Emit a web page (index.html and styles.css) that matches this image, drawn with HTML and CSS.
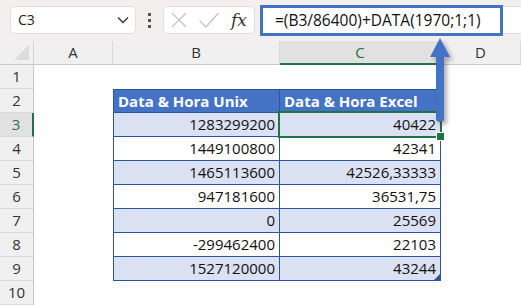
FILE: index.html
```html
<!DOCTYPE html>
<html lang="pt">

<head>
    <meta charset="UTF-8">
    <title>Unix para Excel</title>
    <link rel="stylesheet" href="styles.css">
</head>

<body>
    <div class="app">
        <div class="toolbar">
            <div class="name-box">
                <span>C3</span>
                <svg class="chevron" width="12" height="8" viewBox="0 0 12 8">
                    <path d="M1 1.5 L6 6.5 L11 1.5" fill="none" stroke="#333" stroke-width="1.3" />
                </svg>
            </div>
            <div class="dots"><i></i><i></i><i></i></div>
            <div class="fx-buttons">
                <svg width="18" height="18" viewBox="0 0 18 18">
                    <path d="M2 2 L16 16 M16 2 L2 16" stroke="#c4c4c4" stroke-width="1.3" />
                </svg>
                <svg width="22" height="18" viewBox="0 0 22 18">
                    <path d="M1.5 9.5 L8 16 L20.5 2" fill="none" stroke="#c4c4c4" stroke-width="1.3" />
                </svg>
                <span class="fx">fx</span>
            </div>
            <div class="formula-bar">
                <div class="formula">=(B3/86400)+DATA(1970;1;1)</div>
            </div>
        </div>

        <div class="sheet">
            <div class="corner"><span></span></div>
            <div class="col-head">A</div>
            <div class="col-head">B</div>
            <div class="col-head active">C</div>
            <div class="col-head">D</div>

            <div class="row-head">1</div>
            <div class="cell"></div>
            <div class="cell"></div>
            <div class="cell"></div>
            <div class="cell"></div>

            <div class="row-head">2</div>
            <div class="cell"></div>
            <div class="cell t th first top">Data &amp; Hora Unix</div>
            <div class="cell t th top">Data &amp; Hora Excel</div>
            <div class="cell"></div>

            <div class="row-head active">3</div>
            <div class="cell"></div>
            <div class="cell t band first">1283299200</div>
            <div class="cell t band selected">40422</div>
            <div class="cell"></div>

            <div class="row-head">4</div>
            <div class="cell"></div>
            <div class="cell t first">1449100800</div>
            <div class="cell t">42341</div>
            <div class="cell"></div>

            <div class="row-head">5</div>
            <div class="cell"></div>
            <div class="cell t band first">1465113600</div>
            <div class="cell t band">42526,33333</div>
            <div class="cell"></div>

            <div class="row-head">6</div>
            <div class="cell"></div>
            <div class="cell t first">947181600</div>
            <div class="cell t">36531,75</div>
            <div class="cell"></div>

            <div class="row-head">7</div>
            <div class="cell"></div>
            <div class="cell t band first">0</div>
            <div class="cell t band">25569</div>
            <div class="cell"></div>

            <div class="row-head">8</div>
            <div class="cell"></div>
            <div class="cell t first">-299462400</div>
            <div class="cell t">22103</div>
            <div class="cell"></div>

            <div class="row-head">9</div>
            <div class="cell"></div>
            <div class="cell t band first">1527120000</div>
            <div class="cell t band last">43244</div>
            <div class="cell"></div>

            <div class="row-head">10</div>
            <div class="cell"></div>
            <div class="cell"></div>
            <div class="cell"></div>
            <div class="cell"></div>
        </div>

        <!-- seta apontando para a barra de fórmulas -->
        <svg class="arrow" width="30" height="90" viewBox="0 0 30 90">
            <path d="M15 1 L25 20 L19 20 L19 82 Q19 85 15 85 Q11 85 11 82 L11 20 L5 20 Z" fill="#4472c4" />
        </svg>
    </div>
</body>

</html>
```

FILE: styles.css
```css
* {
    margin: 0;
    padding: 0;
    box-sizing: border-box;
}

body {
    background: #ffffff;
    font-family: "Open Sans", "Noto Sans", sans-serif;
    color: #222;
}

.app {
    position: relative;
    width: 521px;
    height: 306px;
    overflow: hidden;
}

.toolbar {
    height: 41px;
    background: #f4efef;
    display: flex;
    align-items: center;
    padding-left: 10px;
}

.name-box {
    width: 126px;
    height: 28px;
    background: #fff;
    border: 1px solid #e3dede;
    border-radius: 5px;
    display: flex;
    align-items: center;
    justify-content: space-between;
    padding: 0 6px 0 7px;
    font-size: 14px;
    color: #222;
    margin-bottom: 2px;
}

.dots {
    width: 27px;
    display: flex;
    flex-direction: column;
    align-items: center;
    gap: 3px;
}

.dots i {
    display: block;
    width: 3px;
    height: 3px;
    background: #555;
}

.fx-buttons {
    width: 92px;
    height: 28px;
    background: #fff;
    border: 1px solid #e3dede;
    border-radius: 5px;
    display: flex;
    align-items: center;
    padding: 0 6px 0 6px;
    gap: 10px;
    margin-bottom: 2px;
}

.fx {
    font-family: "DejaVu Serif", "Liberation Serif", serif;
    font-style: italic;
    font-size: 17px;
    color: #333;
    margin-left: 1px;
}

.formula-bar {
    flex: 1;
    height: 28px;
    margin-left: 5px;
    margin-bottom: 2px;
    background: #fff;
    border-top: 1px solid #e3dede;
    border-bottom: 1px solid #e3dede;
}

.formula {
    width: 243px;
    height: 31px;
    margin-top: -2px;
    border: 3px solid #4472c4;
    background: #fff;
    font-size: 15.5px;
    line-height: 24px;
    padding-left: 12px;
    color: #111;
}

.sheet {
    display: grid;
    grid-template-columns: 34px 79px 167px 161px 1fr;
    grid-template-rows: 24px repeat(10, 24px);
    font-family: "Open Sans", "Noto Sans", sans-serif;
}

.corner {
    background: #f0f0f0;
    border-right: 1px solid #d4d4d4;
    border-bottom: 1px solid #c8c8c8;
    position: relative;
}

.corner span {
    position: absolute;
    right: 4px;
    bottom: 4px;
    width: 0;
    height: 0;
    border-left: 15px solid transparent;
    border-bottom: 15px solid #dcdcdc;
}

.col-head {
    background: #f0f0f0;
    border-right: 1px solid #d9d9d9;
    border-bottom: 1px solid #c8c8c8;
    text-align: center;
    font-size: 15px;
    line-height: 23px;
    color: #333;
}

.col-head.active {
    background: #e1e1e1;
    border-bottom: 2px solid #217346;
    color: #217346;
}

.row-head {
    background: #f0f0f0;
    border-right: 1px solid #c8c8c8;
    border-bottom: 1px solid #d9d9d9;
    text-align: center;
    font-size: 15px;
    line-height: 23px;
    color: #333;
}

.row-head.active {
    background: #e1e1e1;
    border-right: 2px solid #217346;
    color: #217346;
}

.cell {
    background: #fff;
    font-family: "Open Sans", "Noto Sans", sans-serif;
    font-size: 15px;
    line-height: 23px;
    text-align: right;
    padding-right: 4px;
    color: #111;
}

.t {
    border-right: 1px solid #2f5597;
    border-bottom: 1px solid #2f5597;
}

.t.first {
    border-left: 1px solid #2f5597;
}

.t.top {
    border-top: 1px solid #2f5597;
    line-height: 22px;
}

.t.band {
    background: #d9e1f2;
}

.th {
    background: #4472c4;
    color: #fff;
    font-weight: 700;
    text-align: left;
    padding-left: 4px;
}

.selected {
    position: relative;
}

.selected::after {
    content: "";
    position: absolute;
    left: -2px;
    top: -2px;
    right: -2px;
    bottom: -2px;
    border: 2px solid #217346;
}

.selected::before {
    content: "";
    position: absolute;
    right: -5px;
    bottom: -5px;
    width: 7px;
    height: 7px;
    background: #217346;
    border: 1px solid #fff;
    z-index: 1;
}

.last {
    position: relative;
}

.last::after {
    content: "";
    position: absolute;
    right: 0;
    bottom: 0;
    width: 0;
    height: 0;
    border-left: 6px solid transparent;
    border-bottom: 6px solid #2f5597;
}

.arrow {
    position: absolute;
    left: 425px;
    top: 37px;
    filter: drop-shadow(3px 3px 2px rgba(0, 0, 0, 0.3));
}
```
